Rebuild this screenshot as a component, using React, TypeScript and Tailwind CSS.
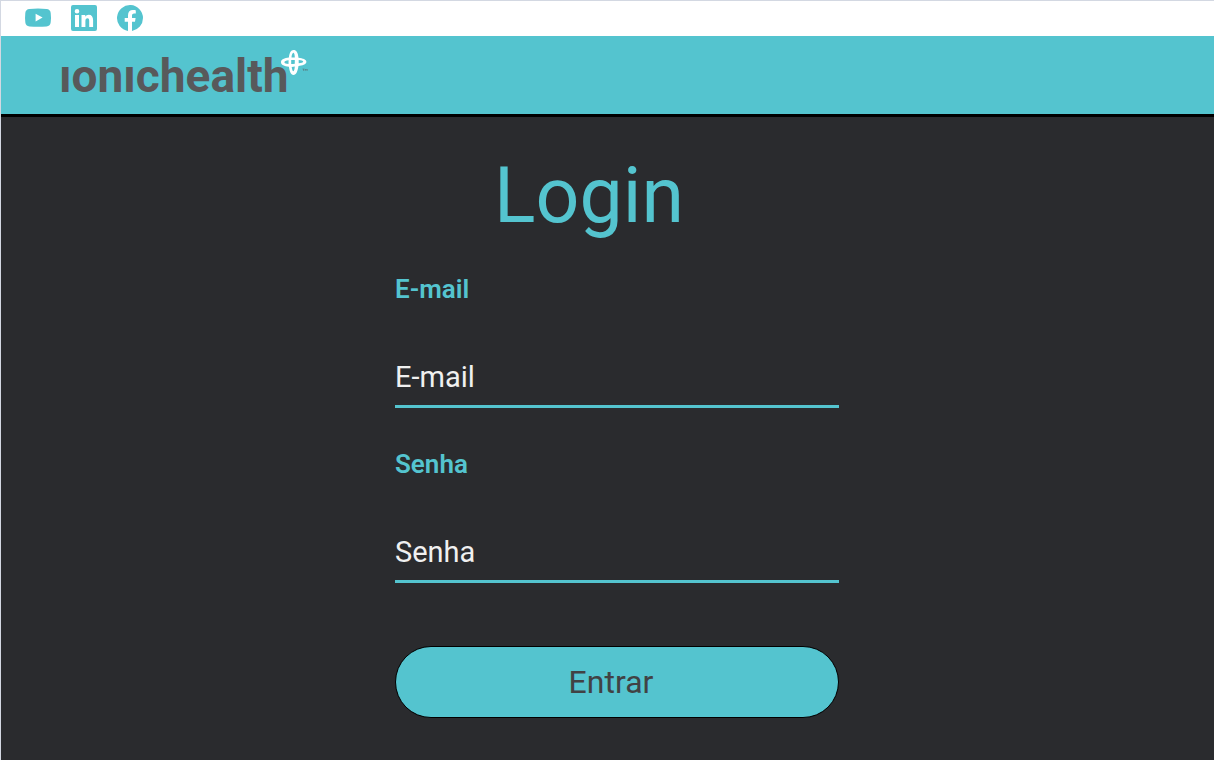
import type { ReactNode } from "react";

function SocialLink({ label, href, children }: { label: string; href: string; children: ReactNode }) {
  return (
    <a href={href} aria-label={label} className="block size-7 text-[#54c4cf]">
      <svg viewBox="0 0 28 28" className="size-7" fill="currentColor" aria-hidden="true">
        {children}
      </svg>
    </a>
  );
}

function SocialBar() {
  return (
    <nav aria-label="Redes sociais" className="flex h-9 items-start gap-[18px] border-t border-[#d3d8e2] bg-white pt-[3px] pl-[23px]">
      <SocialLink label="YouTube" href="https://www.youtube.com">
        <path fillRule="evenodd" d="M5.5 4.9Q14 4.2 22.5 4.9Q26.3 5.2 26.7 8.9Q27.3 13.5 26.7 18.2Q26.3 22 22.5 22.4Q14 23 5.5 22.4Q1.7 22 1.3 18.2Q.8 13.5 1.3 8.9Q1.7 5.2 5.5 4.9ZM11.6 9.8V17.4L18.6 13.6Z" />
      </SocialLink>
      <SocialLink label="LinkedIn" href="https://www.linkedin.com">
        <path fillRule="evenodd" d="M3 1H25Q27 1 27 3V25Q27 27 25 27H3Q1 27 1 25V3Q1 1 3 1ZM5 11V23H9V11ZM7 5A2.3 2.3 0 1 0 7 9.6A2.3 2.3 0 1 0 7 5ZM11.5 11V23H15.4V17C15.4 15.2 16.2 14.2 17.5 14.2C18.8 14.2 19.2 15.2 19.2 17V23H23.1V16.3C23.1 12.7 21.6 10.7 18.8 10.7C17.1 10.7 15.9 11.6 15.3 12.7V11Z" />
      </SocialLink>
      <SocialLink label="Facebook" href="https://www.facebook.com">
        <path d="M27 14.1A13 13 0 1 0 12 26.9V17.8H8.7V14.1H12V11.2C12 7.9 13.9 6.1 16.9 6.1C18.3 6.1 19.8 6.4 19.8 6.4V9.5H18.1C16.5 9.5 16 10.5 16 11.6V14.1H19.6L19 17.8H16V26.9A13 13 0 0 0 27 14.1Z" />
      </SocialLink>
    </nav>
  );
}

function Logo() {
  return (
    <a href="/" aria-label="ionichealth" className="relative flex items-center">
      <span className="text-[46px] leading-[54px] font-bold text-[#58595b]">ıonıchealth</span>
      <svg viewBox="0 0 28 28" className="absolute top-0 left-full -ml-[9px] size-7" fill="none" aria-hidden="true">
        <path
          fill="#fff"
          fillRule="evenodd"
          d="M13.5 1C16.3 1 18 3.6 18.5 8.7C22.8 9.3 26.4 10.4 26.4 12.8C26.4 15.5 22 16.7 18.5 17C17.7 22 16.3 26 13.5 26C10.7 26 9.6 22.2 8.9 17.8C4.3 17.2 1 15.8 1 13.2C1 10.4 4.5 9.2 8.9 8.6C9.4 4 10.8 1 13.5 1ZM13.2 3.8C12.2 4.5 11.7 6.3 11.5 8.4L14.8 8.4C14.7 6 14.3 3.4 13.2 3.8ZM8.6 11.3C6 11.7 4.4 12.3 4.4 13.2C4.4 14.2 6.2 14.7 8.5 14.9ZM11.2 11.1V15.1C12.6 15.1 13.6 15 14.8 14.8V11ZM18.7 11.1V14.3C21.2 14 23.2 13.5 23.2 12.7C23.2 11.8 21.4 11.4 18.7 11.1ZM11.7 18C12.1 20.6 12.6 22.3 13.3 22.3C14.2 22.3 14.6 20.3 14.8 17.6Z"
        />
        <path stroke="#58595b" strokeWidth=".6" opacity=".7" d="M22.5 20H24.5M23.5 20V22M25.2 22V20L26.2 21.2L27.2 20V22" />
      </svg>
    </a>
  );
}

function Field({ id, type, label }: { id: string; type: string; label: string }) {
  return (
    <div className="flex flex-col gap-[54px]">
      <label htmlFor={id} className="text-[26px] leading-8 font-semibold text-[#54c4cf]">
        {label}
      </label>
      <input
        id={id}
        type={type}
        placeholder={label}
        className="h-[49px] w-full border-b-3 border-[#54c4cf] bg-transparent pb-2.5 text-[29px] text-white outline-none placeholder:text-[#f0f0f0]"
      />
    </div>
  );
}

export default function App() {
  return (
    <div className="flex min-h-screen flex-col border-l border-[#d3d8e2] bg-[#2a2b2e] font-[Roboto,sans-serif]">
      <SocialBar />
      <header className="flex h-[81px] items-center border-b-3 border-black bg-[#54c4cf] pt-0.5 pl-[58px]">
        <Logo />
      </header>
      <main className="flex flex-col items-center pt-8 pb-10 pl-[19px]">
        <form className="flex w-full max-w-[444px] flex-col" onSubmit={(e) => e.preventDefault()}>
          <h1 className="pr-14 text-center text-[77px] leading-[94px] text-[#54c4cf]">Login</h1>
          <div className="flex flex-col gap-10 pt-[30px]">
            <Field id="email" type="email" label="E-mail" />
            <Field id="senha" type="password" label="Senha" />
          </div>
          <button
            type="submit"
            className="mt-[63px] h-18 rounded-full border border-black bg-[#54c4cf] pr-3 text-[32px] text-[#414244]"
          >
            Entrar
          </button>
        </form>
      </main>
    </div>
  );
}
